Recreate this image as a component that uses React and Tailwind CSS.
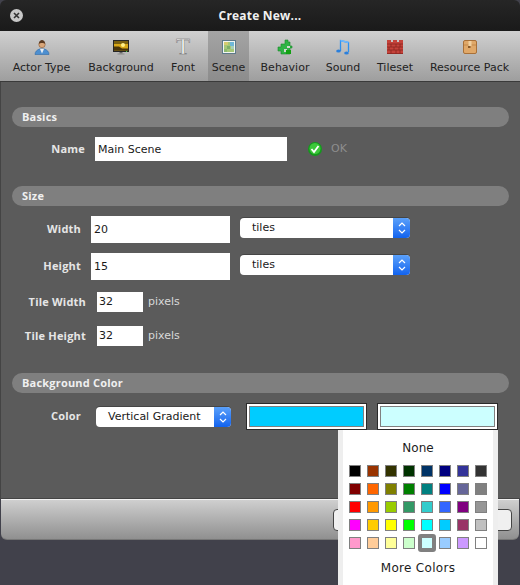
import React from 'react';

const font = 'font-["DejaVu_Sans",sans-serif]';
const bold = 'font-["Open_Sans",sans-serif] font-bold tracking-[0.2px]';

function ActorIcon() {
  return (
    <svg width="16" height="16" viewBox="0 0 16 16">
      <path d="M1 15.500c0-3 2-4.500 4.500-5.500h5c2.500 1 4.500 2.500 4.500 5.500z" fill="#4d8fd0" stroke="#2f6aa8" strokeWidth="0.6" />
      <path d="M6 10h4L8 14.500z" fill="#e8eef5" />
      <circle cx="8" cy="5.500" r="3.200" fill="#d9a679" stroke="#8a5a36" strokeWidth="0.6" />
      <path d="M4.800 5C5 2 6.500 1 8 1s3 1 3.200 4C10 3.800 6 3.800 4.800 5z" fill="#5a3a22" />
    </svg>
  );
}

function BackgroundIcon() {
  return (
    <svg width="16" height="15" viewBox="0 0 16 15">
      <rect x="0" y="0" width="16" height="12" fill="#262626" />
      <rect x="1" y="1" width="14" height="9.500" fill="#d8a818" />
      <rect x="1" y="1" width="14" height="3" fill="#7a6010" />
      <circle cx="10" cy="5" r="2" fill="#fff08a" />
      <path d="M1 6.500h5l3 2h6v2H1z" fill="#4a3508" />
      <rect x="13" y="11" width="1" height="1" fill="#40d040" />
      <rect x="6.500" y="12" width="3" height="1.500" fill="#666" />
      <rect x="4.500" y="13.500" width="7" height="1" fill="#8a8a8a" />
    </svg>
  );
}

function SceneIcon() {
  return (
    <svg width="14" height="14" viewBox="0 0 14 14">
      <rect x="0.500" y="0.500" width="13" height="13" fill="#f2f6f2" stroke="#5e7a8a" />
      <rect x="2" y="2" width="10" height="10" fill="#a6c878" />
      <rect x="2" y="2" width="4" height="3" fill="#d6cc70" />
      <rect x="8" y="2" width="4" height="4" fill="#6fb8d8" />
      <rect x="9" y="6" width="3" height="3" fill="#a8d0b8" />
      <rect x="5" y="6" width="3" height="3" fill="#7fb068" />
      <rect x="2" y="9" width="3" height="3" fill="#8cba70" />
    </svg>
  );
}

function BehaviorIcon() {
  return (
    <svg width="16" height="16" viewBox="0 0 16 16">
      <path d="M8 1h3v2h2v4h2v2h-2v6H4v-3H1V8h3V5h4z" fill="#2fb344" stroke="#178a2a" strokeWidth="0.6" />
      <rect x="7" y="10" width="3" height="3" fill="#cfd8cf" />
      <rect x="10" y="7" width="3" height="2" fill="#cfd8cf" />
      <rect x="9" y="11" width="5" height="4" fill="#12a012" />
    </svg>
  );
}

function SoundIcon() {
  return (
    <svg width="14" height="16" viewBox="0 0 14 16" fill="none">
      <path d="M4.500 12V1.500l8 2V13" stroke="#2b8ff0" strokeWidth="1.300" />
      <path d="M4.500 1.500l8 2" stroke="#6cb8ff" strokeWidth="1.400" />
      <ellipse cx="2.500" cy="12" rx="2.300" ry="1.600" fill="#2a7fdc" />
      <ellipse cx="10.500" cy="14" rx="2.300" ry="1.600" fill="#2a7fdc" />
    </svg>
  );
}

function TilesetIcon() {
  return (
    <svg width="16" height="14" viewBox="0 0 16 14">
      <path d="M0 0h4v2h2V0h4v2h2V0h4v14H0z" fill="#c4423a" />
      <g stroke="#8a2620" strokeWidth="0.800">
        <path d="M0 4h16M0 7h16M0 10h16M0 13.500h16" />
        <path d="M4 4v3M9 4v3M13 4v3M2 7v3M7 7v3M12 7v3M4 10v3.500M9 10v3.500M13 10v3.500" />
      </g>
    </svg>
  );
}

function PackIcon() {
  return (
    <svg width="14" height="14" viewBox="0 0 14 14">
      <rect x="0.500" y="0.500" width="13" height="13" rx="1.500" fill="#e0a868" stroke="#a87038" />
      <path d="M1 5h12" stroke="#c48a4a" />
      <rect x="5.500" y="1" width="3" height="5" fill="#f0d0a0" />
      <rect x="5" y="6" width="2.500" height="2" fill="#8a5a2a" />
    </svg>
  );
}

const toolbar = [
  { label: 'Actor Type', icon: <ActorIcon />, w: 'w-[79px]' },
  { label: 'Background', icon: <BackgroundIcon />, w: 'w-[80px]' },
  { label: 'Font', icon: <span className='font-["Liberation_Serif",serif] text-[23px] leading-[16px] text-white [-webkit-text-stroke:0.5px_#707070]'>T</span>, w: 'w-[47px] pr-[3px]' },
  { label: 'Scene', icon: <SceneIcon />, w: 'w-[41px]', active: true },
  { label: 'Behavior', icon: <BehaviorIcon />, w: 'w-[72px]' },
  { label: 'Sound', icon: <SoundIcon />, w: 'w-[44px]' },
  { label: 'Tileset', icon: <TilesetIcon />, w: 'w-[60px]' },
  { label: 'Resource Pack', icon: <PackIcon />, w: 'w-[89px]' },
];

const swatches = [
  ['#000000', '#993300', '#333300', '#003300', '#003366', '#000080', '#333399', '#333333'],
  ['#800000', '#ff6600', '#808000', '#008000', '#008080', '#0000ff', '#666699', '#808080'],
  ['#ff0000', '#ff9900', '#99cc00', '#339966', '#33cccc', '#3366ff', '#800080', '#969696'],
  ['#ff00ff', '#ffcc00', '#ffff00', '#00ff00', '#00ffff', '#00ccff', '#993366', '#c0c0c0'],
  ['#ff99cc', '#ffcc99', '#ffff99', '#ccffcc', '#ccffff', '#99ccff', '#cc99ff', '#ffffff'],
];

function SectionBar({ children }) {
  return (
    <div className={`${bold} h-5 mx-[11px] rounded-full bg-[#7f7f7f] pl-[10px] text-[11px] leading-5 text-[#f0f0f0]`}>
      {children}
    </div>
  );
}

function Label({ w, children }) {
  return <div className={`${w} ${bold} text-right text-[11px] text-[#e6e6e6]`}>{children}</div>;
}

function SelectBox({ w, children }) {
  return (
    <div className={`${w} h-5 flex rounded-[4px] bg-white overflow-hidden shadow-[0_-1px_0_#454545]`}>
      <div className="flex-1 pl-3 text-[11px] leading-5 text-[#1a1a1a]">{children}</div>
      <div className="w-[17px] bg-gradient-to-b from-[#5aa0fa] to-[#1062ee] flex items-center justify-center">
        <svg width="8" height="14" viewBox="0 0 8 14" fill="none" stroke="#fff" strokeWidth="1.200">
          <path d="M1 5l3-3 3 3M1 9l3 3 3-3" />
        </svg>
      </div>
    </div>
  );
}

function ColorWell({ color }) {
  return (
    <div className="w-[121px] h-[27px] border border-[#2a2a2a] bg-white p-[2px]">
      <div className="h-full border border-[#808080]" style={{ backgroundColor: color }} />
    </div>
  );
}

export default function App() {
  return (
    <div className={`${font} relative w-[520px] h-[585px] flex flex-col bg-[#41414b] overflow-hidden`}>
      <div className="h-[31px] shrink-0 relative flex items-center justify-center rounded-t-[6px] bg-gradient-to-b from-[#262626] to-[#1a1a1a] font-['Open_Sans',sans-serif] font-bold text-[12px] tracking-[0.2px] text-[#f0f0f0]">
        <span className="absolute left-[10px] top-[9px] w-[13px] h-[13px] rounded-full bg-[#c8c8c8] flex items-center justify-center">
          <svg width="7" height="7" viewBox="0 0 7 7" stroke="#333" strokeWidth="1.600">
            <path d="M1 1l5 5M6 1L1 6" />
          </svg>
        </span>
        Create New...
      </div>

      <div className="h-[51px] shrink-0 flex pl-[2px] border-b border-[#3a3a3a] bg-gradient-to-b from-[#d0d0d0] to-[#9e9e9e]">
        {toolbar.map((t) => (
          <div
            key={t.label}
            className={`${t.w} shrink-0 flex flex-col items-center pt-[8px] ${t.active ? 'bg-gradient-to-b from-[#a4a4a4] to-[#8c8c8c]' : ''}`}
          >
            <div className="h-4 flex items-center justify-center">{t.icon}</div>
            <div className="mt-[6px] text-[11px] leading-[14px] whitespace-nowrap text-[#222222]">{t.label}</div>
          </div>
        ))}
      </div>

      <div className="h-[417px] shrink-0 bg-[#5b5b5b] pt-[25px] border-l border-b border-[#444]">
        <SectionBar>Basics</SectionBar>
        <div className="mt-[10px] flex items-center h-6">
          <Label w="w-[84px]">Name</Label>
          <div className="ml-[10px] w-[192px] h-6 bg-white pl-[3px] text-[11px] leading-[25px] text-[#1a1a1a]">Main Scene</div>
          <svg className="ml-[21px]" width="14" height="14" viewBox="0 0 14 14">
            <circle cx="7" cy="7" r="7" fill="#14981c" />
            <circle cx="7" cy="6.500" r="5.500" fill="#3cc83a" />
            <path d="M3.500 7l2.500 3 4.500-6" fill="none" stroke="#fff" strokeWidth="1.800" />
          </svg>
          <span className="ml-[9px] text-[11px] text-[#8e8e8e]">OK</span>
        </div>

        <div className="mt-[25px]">
          <SectionBar>Size</SectionBar>
        </div>
        <div className="mt-[10px] flex items-center h-[27px]">
          <Label w="w-[80px]">Width</Label>
          <div className="ml-[10px] w-[139px] h-[27px] bg-white pl-[3px] text-[11px] leading-[27px] text-[#1a1a1a]">20</div>
          <div className="ml-[10px] mb-[3px]"><SelectBox w="w-[170px]">tiles</SelectBox></div>
        </div>
        <div className="mt-[10px] flex items-center h-[27px]">
          <Label w="w-[80px]">Height</Label>
          <div className="ml-[10px] w-[139px] h-[27px] bg-white pl-[3px] text-[11px] leading-[27px] text-[#1a1a1a]">15</div>
          <div className="ml-[10px] mb-[3px]"><SelectBox w="w-[170px]">tiles</SelectBox></div>
        </div>
        <div className="mt-[12px] flex items-center h-5">
          <Label w="w-[85px]">Tile Width</Label>
          <div className="ml-[11px] w-[46px] h-5 bg-white pl-[2px] text-[11px] leading-5 text-[#1a1a1a]">32</div>
          <span className="ml-[5px] text-[11px] text-[#d8d8d8]">pixels</span>
        </div>
        <div className="mt-[14px] flex items-center h-5">
          <Label w="w-[85px]">Tile Height</Label>
          <div className="ml-[11px] w-[46px] h-5 bg-white pl-[2px] text-[11px] leading-5 text-[#1a1a1a]">32</div>
          <span className="ml-[5px] text-[11px] text-[#d8d8d8]">pixels</span>
        </div>

        <div className="mt-[27px]">
          <SectionBar>Background Color</SectionBar>
        </div>
        <div className="mt-[10px] flex items-center h-[27px]">
          <Label w="w-[80px]">Color</Label>
          <div className="ml-[15px]"><SelectBox w="w-[135px]">Vertical Gradient</SelectBox></div>
          <div className="ml-[15px]"><ColorWell color="#00ccff" /></div>
          <div className="ml-[10px]"><ColorWell color="#ccffff" /></div>
        </div>
      </div>

      <div className="h-[41px] shrink-0 flex mx-px rounded-b-[6px] border-t border-[#f2f2f2] border-b border-b-[#777] bg-gradient-to-b from-[#cfcfcf] to-[#909090]">
        <div className="ml-auto mr-[7px] mt-[9px] w-[179px] h-[22px] rounded-[4px] border border-[#444] bg-[#f0f0f0]" />
      </div>

      <div className="absolute left-[338px] top-[430px] w-[160px] h-[155px] border-x-[5px] border-[#eeeeee] bg-white">
        <div className="mt-[10px] text-center text-[12px] leading-[16px] text-[#1c1c1c]">None</div>
        <div className="mt-[9px] ml-[6px] flex flex-col gap-[6px]">
          {swatches.map((row, r) => (
            <div key={r} className="flex gap-[6px]">
              {row.map((c) => (
                <div key={c} className="relative w-[12px] h-[12px] border border-[#808080]" style={{ backgroundColor: c }}>
                  {c === '#ccffff' && <div className="absolute -inset-[4px] rounded-[3px] border-[3px] border-[#808080]" />}
                </div>
              ))}
            </div>
          ))}
        </div>
        <div className="mt-[11px] text-center text-[12px] tracking-[0.3px] leading-[16px] text-[#1c1c1c]">More Colors</div>
      </div>
    </div>
  );
}
